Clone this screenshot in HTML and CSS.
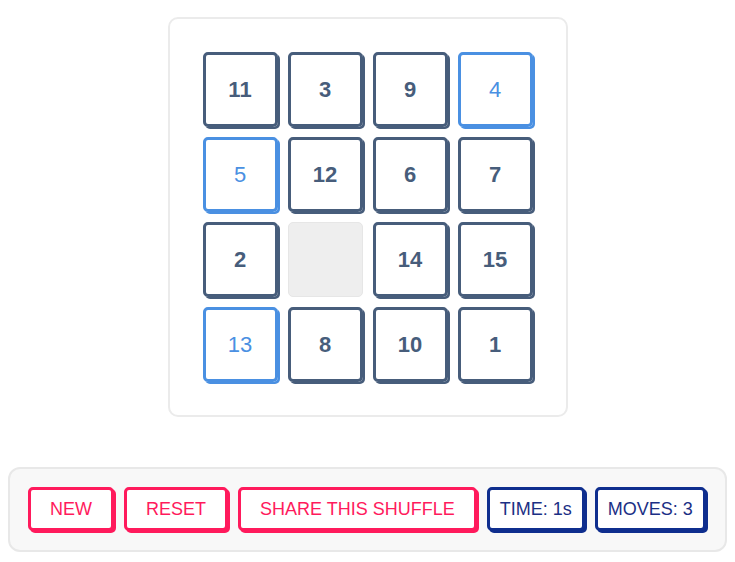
FILE: index.html
```html
<!DOCTYPE html>
<html>
<head>
<meta name="viewport" content="width=device-width, initial-scale=1">
<link rel="stylesheet" href="styles.css">
</head>
<body>

<div class="board">
  <div class="tile">11</div>
  <div class="tile">3</div>
  <div class="tile">9</div>
  <div class="tile placed">4</div>
  <div class="tile placed">5</div>
  <div class="tile">12</div>
  <div class="tile">6</div>
  <div class="tile">7</div>
  <div class="tile">2</div>
  <div class="tile empty"></div>
  <div class="tile">14</div>
  <div class="tile">15</div>
  <div class="tile placed">13</div>
  <div class="tile">8</div>
  <div class="tile">10</div>
  <div class="tile">1</div>
</div>

<div class="controls">
  <button class="btn">NEW</button>
  <button class="btn">RESET</button>
  <button class="btn">SHARE THIS SHUFFLE</button>
  <span class="info">TIME: 1s</span>
  <span class="info">MOVES: 3</span>
</div>

</body>
</html>
```

FILE: styles.css
```css
body {
    margin: 8px;
    font-family: "Liberation Sans", Arial, sans-serif;
    background-color: #fff;
}

/* Board */
.board {
    box-sizing: border-box;
    width: 400px;
    height: 400px;
    margin: 9px auto 0;
    padding: 28px;
    border: 2px solid #ebebeb;
    border-radius: 10px;
    background-color: #fff;
    display: grid;
    grid-template-columns: repeat(4, 85px);
    grid-auto-rows: 85px;
}

.tile {
    box-sizing: border-box;
    width: 75px;
    height: 75px;
    margin: 5px;
    border: 3px solid #475d7b;
    border-radius: 5px;
    box-shadow: 2px 2px 0 #475d7b;
    display: flex;
    align-items: center;
    justify-content: center;
    font-size: 22px;
    font-weight: bold;
    color: #475d7b;
}

/* tile already in its right place */
.tile.placed {
    border-color: #4a90e2;
    box-shadow: 2px 2px 0 #4a90e2;
    color: #4a90e2;
    font-weight: normal;
}

.tile.empty {
    border: 1px solid #e6e6e6;
    background-color: #eee;
    box-shadow: none;
}

/* Control bar */
.controls {
    margin-top: 50px;
    padding: 18px 18px 19px;
    border: 2px solid #e8e8e8;
    border-radius: 12px;
    background-color: #f8f8f8;
    display: flex;
    gap: 10px;
}

.btn, .info {
    box-sizing: border-box;
    height: 44px;
    padding: 9px 19px;
    border: 3px solid #ff1a5c;
    border-radius: 5px;
    box-shadow: 2px 2px 0 #ff1a5c;
    background-color: #fff;
    font-family: "Liberation Sans", Arial, sans-serif;
    font-size: 18px;
    line-height: 20px;
    color: #ff1a5c;
    white-space: nowrap;
}

.btn {
    cursor: pointer;
}

.info {
    padding: 9px 10px;
    border-color: #0f2e8e;
    box-shadow: 2px 2px 0 #0f2e8e;
    color: #1b2f85;
}
```
